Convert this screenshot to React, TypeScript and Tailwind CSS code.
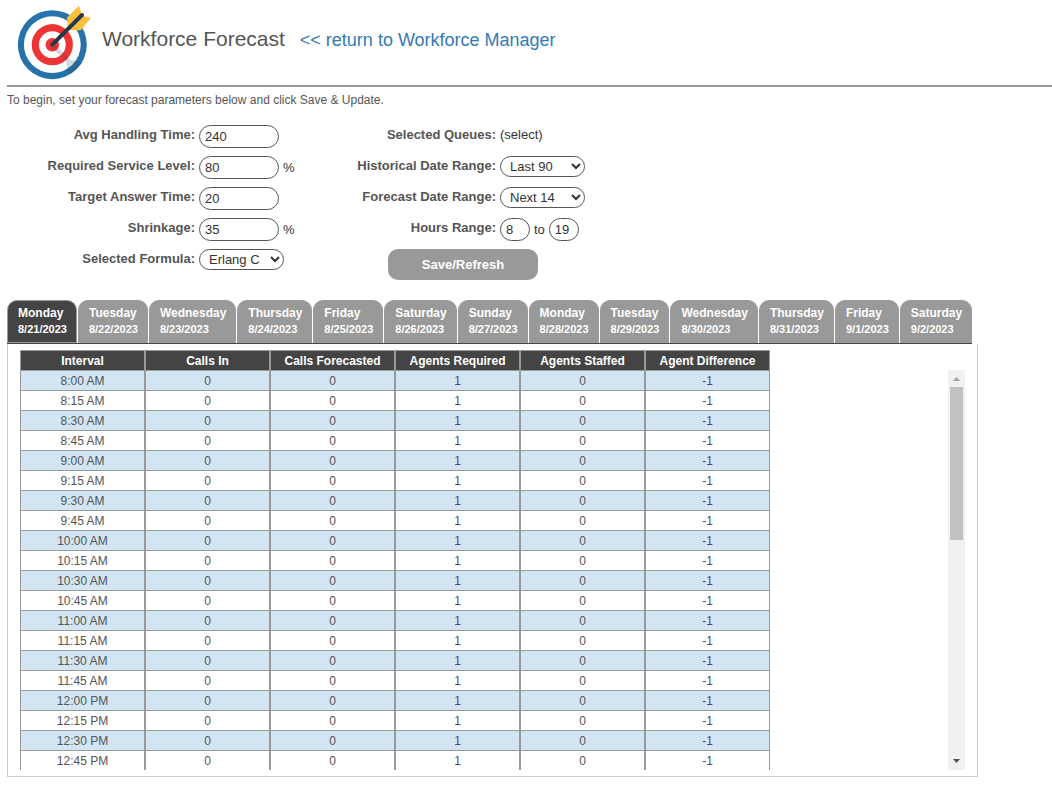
import type { ReactNode } from "react";

const days = [
  { name: "Monday", date: "8/21/2023" },
  { name: "Tuesday", date: "8/22/2023" },
  { name: "Wednesday", date: "8/23/2023" },
  { name: "Thursday", date: "8/24/2023" },
  { name: "Friday", date: "8/25/2023" },
  { name: "Saturday", date: "8/26/2023" },
  { name: "Sunday", date: "8/27/2023" },
  { name: "Monday", date: "8/28/2023" },
  { name: "Tuesday", date: "8/29/2023" },
  { name: "Wednesday", date: "8/30/2023" },
  { name: "Thursday", date: "8/31/2023" },
  { name: "Friday", date: "9/1/2023" },
  { name: "Saturday", date: "9/2/2023" },
];

const columns = [
  "Interval",
  "Calls In",
  "Calls Forecasted",
  "Agents Required",
  "Agents Staffed",
  "Agent Difference",
];

// Quarter-hour intervals starting at 8:00 AM
const intervals = Array.from({ length: 20 }).map((_, i) => {
  const hour = 8 + Math.floor(i / 4);
  const minutes = String((i % 4) * 15).padStart(2, "0");
  return `${hour}:${minutes} ${hour < 12 ? "AM" : "PM"}`;
});

function TargetLogo() {
  return (
    <svg className="h-20 w-20 shrink-0" viewBox="14 3 80 80" aria-hidden="true">
      <circle cx="52.3" cy="44.7" r="34.5" fill="#2573aa" />
      <circle cx="52.3" cy="44.7" r="28.4" fill="#fff" />
      <circle cx="52.3" cy="44.7" r="20.6" fill="#ef3434" />
      <circle cx="52.3" cy="44.7" r="13.4" fill="#fff" />
      <circle cx="52.3" cy="44.7" r="6.8" fill="#ef3434" />
      <path
        d="M51 46.5 L54 43.5 L70.5 60 L79.5 61 L82.5 62 A34.5 34.5 0 0 1 70 74.3 L67 70.5 L66.5 62.5 Z"
        fill="#34485c"
        fillOpacity="0.2"
      />
      <path d="M67.7 29.5 L67 17.5 L79 5.7 L82 15.5 Z" fill="#fbbf3b" />
      <path d="M68.5 30 L80.5 30.3 L91 18 L82 15.5 Z" fill="#fbbf3b" />
      <path d="M52.3 44.7 L82 15" stroke="#26374a" strokeWidth="4" strokeLinecap="round" />
    </svg>
  );
}

function Field({ id, label, children }: { id: string; label: string; children: ReactNode }) {
  return (
    <div className="flex h-[31px] items-start gap-1">
      <label htmlFor={id} className="flex-1 text-right font-bold leading-5">
        {label}
      </label>
      <div className="flex w-[102px] items-center gap-1 text-[#333]">{children}</div>
    </div>
  );
}

function TextInput({ id, value, short, label }: { id: string; value: string; short?: boolean; label?: string }) {
  return (
    <input
      id={id}
      aria-label={label}
      defaultValue={value}
      className={`h-[23px] rounded-xl border border-[#555] bg-white px-[5px] ${short ? "w-[30px]" : "w-20"}`}
    />
  );
}

function Select({ id, value }: { id: string; value: string }) {
  return (
    <select id={id} className="h-[21px] w-[85px] rounded-xl border border-[#555] bg-white px-[5px]">
      <option>{value}</option>
    </select>
  );
}

function DayTabs() {
  return (
    <div role="tablist" className="mr-[6px] flex gap-px overflow-hidden border-b border-[#444]">
      {days.map((day, i) => (
        <button
          key={day.date}
          role="tab"
          aria-selected={i === 0}
          className={`h-[43px] shrink-0 rounded-t-[10px] border border-[#999] pr-[9px] pb-0.5 pl-2.5 text-left font-bold text-white ${
            i === 0 ? "bg-[#444]" : "bg-[#999]"
          }`}
        >
          <span className="block text-xs leading-4">{day.name}</span>
          <span className="block text-[11px] leading-4">{day.date}</span>
        </button>
      ))}
    </div>
  );
}

function ForecastTable() {
  const cell = "h-5 border-x border-t border-[#999] p-0 leading-4";
  return (
    <table className="w-[750px] table-fixed border-separate border-spacing-0 text-center text-xs">
      <thead>
        <tr className="bg-[#444] text-white">
          {columns.map((column) => (
            <th key={column} className={`${cell} font-bold`}>
              {column}
            </th>
          ))}
        </tr>
      </thead>
      <tbody>
        {intervals.map((interval) => (
          <tr key={interval} className="odd:bg-[#d1e6f2]">
            <td className={cell}>{interval}</td>
            <td className={cell}>0</td>
            <td className={cell}>0</td>
            <td className={`${cell} text-[#5b3f78]`}>1</td>
            <td className={cell}>0</td>
            <td className={`${cell} text-[#5b3f78]`}>-1</td>
          </tr>
        ))}
      </tbody>
    </table>
  );
}

function ScrollBar() {
  return (
    <div className="mt-5 flex w-[17px] flex-col items-center bg-[#f1f1f1]" aria-hidden="true">
      <svg className="h-[17px] w-[17px]" viewBox="0 0 17 17">
        <path d="M5 11 L8.5 7 L12 11 Z" fill="#a3a3a3" />
      </svg>
      <div className="h-[153px] w-[13px] bg-[#c1c1c1]" />
      <svg className="mt-auto h-[17px] w-[17px]" viewBox="0 0 17 17">
        <path d="M5 6 L8.5 10 L12 6 Z" fill="#505050" />
      </svg>
    </div>
  );
}

export default function App() {
  return (
    <main className="min-h-screen overflow-hidden bg-white pl-[7px] font-['Liberation_Sans',Arial,sans-serif] text-[13px] text-[#555]">
      <header className="flex items-center border-b-2 border-[#999] pt-[3px] pb-0.5 pl-[7px]">
        <TargetLogo />
        <div className="flex items-baseline gap-[15px] pb-2 pl-2">
          <h1 className="text-[21px] leading-7">Workforce Forecast</h1>
          <a href="#manager" className="text-lg leading-7 text-[#337ab7]">
            &lt;&lt; return to Workforce Manager
          </a>
        </div>
      </header>

      <p className="pt-[3px] text-xs leading-5">
        To begin, set your forecast parameters below and click Save &amp; Update.
      </p>

      <form className="flex pt-[15px]" onSubmit={(e) => e.preventDefault()}>
        <div className="w-[294px]">
          <Field id="handling" label="Avg Handling Time:">
            <TextInput id="handling" value="240" />
          </Field>
          <Field id="service" label="Required Service Level:">
            <TextInput id="service" value="80" />
            <span>%</span>
          </Field>
          <Field id="answer" label="Target Answer Time:">
            <TextInput id="answer" value="20" />
          </Field>
          <Field id="shrinkage" label="Shrinkage:">
            <TextInput id="shrinkage" value="35" />
            <span>%</span>
          </Field>
          <Field id="formula" label="Selected Formula:">
            <Select id="formula" value="Erlang C" />
          </Field>
        </div>

        <div className="w-[301px]">
          <Field id="queues" label="Selected Queues:">
            <button id="queues" type="button" className="leading-5">
              (select)
            </button>
          </Field>
          <Field id="history" label="Historical Date Range:">
            <Select id="history" value="Last 90" />
          </Field>
          <Field id="forecast" label="Forecast Date Range:">
            <Select id="forecast" value="Next 14" />
          </Field>
          <Field id="from" label="Hours Range:">
            <TextInput id="from" value="8" short />
            <span>to</span>
            <TextInput id="to" value="19" label="Hours range end" short />
          </Field>
          <button className="ml-[87px] h-[31px] w-[150px] rounded-[10px] bg-[#999] font-bold text-white">
            Save/Refresh
          </button>
        </div>
      </form>

      <section className="mt-5 max-w-[971px]">
        <DayTabs />
        <div className="flex justify-between border-x border-b border-[#ccc] pt-1.5 pr-3 pb-1.5 pl-3">
          <ForecastTable />
          <ScrollBar />
        </div>
      </section>
    </main>
  );
}
